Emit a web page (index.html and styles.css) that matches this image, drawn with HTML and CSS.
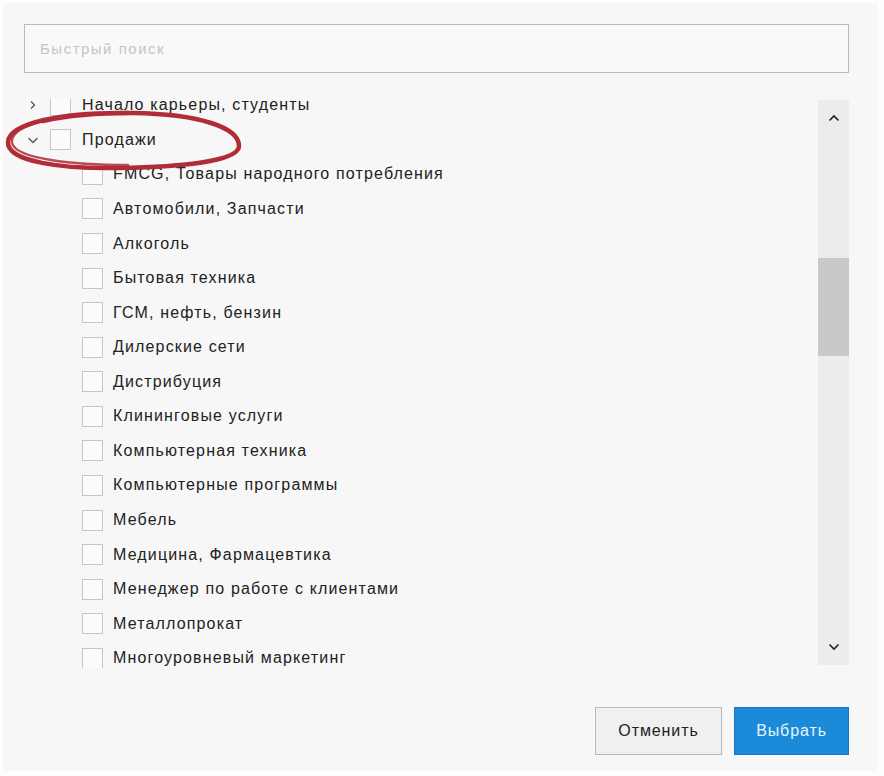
FILE: index.html
```html
<!DOCTYPE html>
<html lang="ru">
<head>
<meta charset="utf-8">
<link rel="stylesheet" href="styles.css">
</head>
<body>
<div class="dialog">
  <div class="search">Быстрый поиск</div>
  <div class="body">
    <div class="list">
      <div class="rows">
        <div class="row lvl0"><span class="chev"><svg width="10" height="10" viewBox="0 0 10 10"><path d="M3 1.5 L6.5 5 L3 8.5" fill="none" stroke="#555" stroke-width="1.3"/></svg></span><span class="cb"></span><span class="label">Начало карьеры, студенты</span></div>
        <div class="row lvl0"><span class="chev"><svg width="12" height="10" viewBox="0 0 12 10"><path d="M1.5 3 L6 7.5 L10.5 3" fill="none" stroke="#555" stroke-width="1.3"/></svg></span><span class="cb"></span><span class="label">Продажи</span></div>
        <div class="row lvl1"><span class="cb"></span><span class="label">FMCG, Товары народного потребления</span></div>
        <div class="row lvl1"><span class="cb"></span><span class="label">Автомобили, Запчасти</span></div>
        <div class="row lvl1"><span class="cb"></span><span class="label">Алкоголь</span></div>
        <div class="row lvl1"><span class="cb"></span><span class="label">Бытовая техника</span></div>
        <div class="row lvl1"><span class="cb"></span><span class="label">ГСМ, нефть, бензин</span></div>
        <div class="row lvl1"><span class="cb"></span><span class="label">Дилерские сети</span></div>
        <div class="row lvl1"><span class="cb"></span><span class="label">Дистрибуция</span></div>
        <div class="row lvl1"><span class="cb"></span><span class="label">Клининговые услуги</span></div>
        <div class="row lvl1"><span class="cb"></span><span class="label">Компьютерная техника</span></div>
        <div class="row lvl1"><span class="cb"></span><span class="label">Компьютерные программы</span></div>
        <div class="row lvl1"><span class="cb"></span><span class="label">Мебель</span></div>
        <div class="row lvl1"><span class="cb"></span><span class="label">Медицина, Фармацевтика</span></div>
        <div class="row lvl1"><span class="cb"></span><span class="label">Менеджер по работе с клиентами</span></div>
        <div class="row lvl1"><span class="cb"></span><span class="label">Металлопрокат</span></div>
        <div class="row lvl1"><span class="cb"></span><span class="label">Многоуровневый маркетинг</span></div>
      </div>
    </div>
    <div class="scrollbar">
      <span class="arrow"><svg width="12" height="8" viewBox="0 0 12 8"><path d="M1.5 6.5 L6 2 L10.5 6.5" fill="none" stroke="#222" stroke-width="1.6"/></svg></span>
      <div class="track"><div class="thumb"></div></div>
      <span class="arrow"><svg width="12" height="8" viewBox="0 0 12 8"><path d="M1.5 1.5 L6 6 L10.5 1.5" fill="none" stroke="#222" stroke-width="1.6"/></svg></span>
    </div>
  </div>
  <div class="footer">
    <button class="btn cancel">Отменить</button>
    <button class="btn primary">Выбрать</button>
  </div>
  <svg class="mark" width="250" height="72" viewBox="0 0 250 72">
    <path d="M125 8 C 60 7, 6 18, 5 37 C 4 57, 60 64, 115 63 C 180 62, 236 56, 236 41 C 236 22, 195 9, 130 8 C 95 8, 62 11, 40 16" fill="none" stroke="#b02d38" stroke-width="4.5" stroke-linecap="round"/>
    <path d="M32 18 C 14 24, 8 31, 9 38 C 13 54, 70 60, 125 60" fill="none" stroke="#b02d38" stroke-width="2.5" stroke-linecap="round" opacity="0.85"/>
  </svg>
</div>
</body>
</html>
```
FILE: styles.css
```css
* { box-sizing: border-box; }
html, body { margin: 0; padding: 0; }
body {
  background: #fdfdfd;
  font-family: "Liberation Sans", Arial, sans-serif;
  width: 884px;
  height: 776px;
  overflow: hidden;
}
.dialog {
  position: relative;
  margin: 3px 0 0 3px;
  width: 875px;
  height: 768px;
  background: #f7f7f7;
  padding: 21px 29px 0 21px;
}
.search {
  height: 49px;
  border: 1px solid #b9b9b9;
  background: #f9f9f9;
  color: #c4c4c4;
  font-size: 15px;
  letter-spacing: 1.5px;
  line-height: 47px;
  padding-left: 15px;
}
.body {
  display: flex;
  margin-top: 23px;
  height: 572px;
}
.list {
  flex: 1;
  overflow: hidden;
  margin-top: 3px;
  height: 569px;
}
.rows { margin-top: -11px; }
.row {
  display: flex;
  align-items: center;
  height: 34.57px;
  font-size: 16px;
  letter-spacing: 1.15px;
  color: #222;
  white-space: nowrap;
}
.lvl1 { padding-left: 58px; }
.chev {
  width: 18px;
  display: flex;
  justify-content: center;
  margin-right: 8px;
}
.cb {
  width: 21px;
  height: 21px;
  border: 1px solid #c6c6c6;
  background: #fbfbfb;
  flex: none;
  margin-right: 11px;
}
.lvl1 .cb { margin-right: 10px; }
.scrollbar {
  width: 31px;
  margin-top: 4px;
  height: 565px;
  background: #ececec;
  display: flex;
  flex-direction: column;
  align-items: center;
}
.arrow {
  height: 36px;
  display: flex;
  align-items: center;
  justify-content: center;
  flex: none;
}
.track {
  flex: 1;
  width: 100%;
}
.thumb {
  margin-top: 122px;
  height: 98px;
  background: #c9c9c9;
}
.footer {
  display: flex;
  justify-content: flex-end;
  gap: 12px;
  margin-top: 39px;
}
.btn {
  height: 48px;
  font-family: "Liberation Sans", Arial, sans-serif;
  font-size: 16px;
  letter-spacing: 0.9px;
  border-radius: 0;
  padding: 0;
}
.cancel {
  width: 127px;
  background: #f0f0f0;
  border: 1px solid #b8b8b8;
  color: #222;
}
.primary {
  width: 115px;
  background: #1b8ad8;
  border: 1px solid #1577bf;
  color: #e6f6ff;
}
.mark {
  position: absolute;
  left: 0;
  top: 102px;
}
```
